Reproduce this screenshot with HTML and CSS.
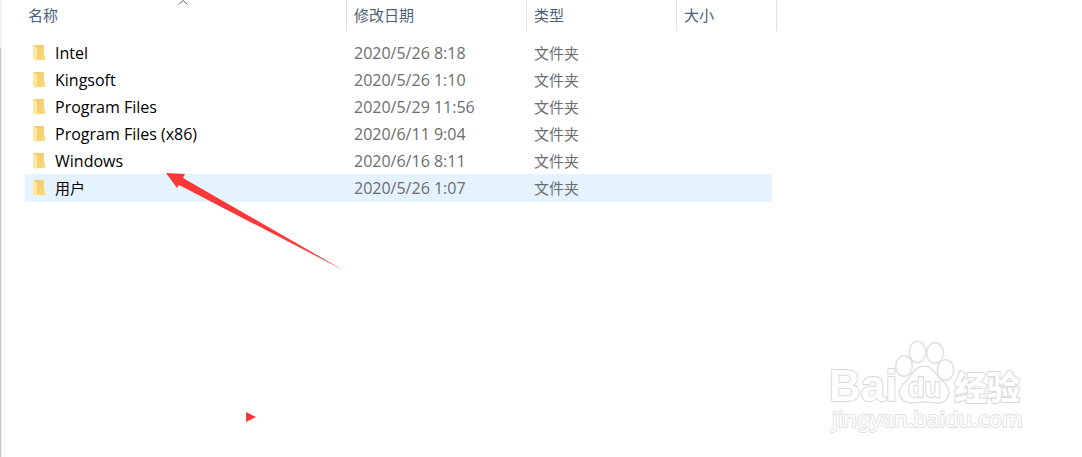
FILE: index.html
```html
<!DOCTYPE html>
<html lang="zh-CN">
<head>
<meta charset="utf-8">
<title>文件资源管理器</title>
<link rel="stylesheet" href="styles.css">
</head>
<body>
<svg class="defs" aria-hidden="true">
  <defs>
    <linearGradient id="folder-back" x1="0" y1="0" x2="1" y2="1">
      <stop offset="0" stop-color="#edc666"/>
      <stop offset="1" stop-color="#fbdc7e"/>
    </linearGradient>
    <symbol id="folder" viewBox="0 0 12 18">
      <path fill="url(#folder-back)" d="M0 1H11V11H12V16H4Z"/>
      <path fill="#ffe8a3" d="M0 1L4 3.500V17.500L0 15.500Z"/>
    </symbol>
  </defs>
</svg>
<main class="explorer">
  <div class="scroll-edge"><div class="scroll-thumb"></div></div>
  <table class="files">
    <colgroup><col class="col-name"><col class="col-date"><col class="col-type"><col class="col-size"></colgroup>
    <thead>
      <tr>
        <th><button class="sort" type="button">名称</button>
          <svg class="caret" viewBox="0 0 10 5" aria-hidden="true"><path d="M0.5 4.5L5 0.5L9.5 4.5"/></svg></th>
        <th><button class="sort" type="button">修改日期</button></th>
        <th><button class="sort" type="button">类型</button></th>
        <th><button class="sort" type="button">大小</button></th>
      </tr>
    </thead>
    <tbody>
      <tr><td><div class="name"><svg class="folder"><use href="#folder"/></svg>Intel</div></td><td class="date">2020/5/26 8:18</td><td>文件夹</td><td></td></tr>
      <tr><td><div class="name"><svg class="folder"><use href="#folder"/></svg>Kingsoft</div></td><td class="date">2020/5/26 1:10</td><td>文件夹</td><td></td></tr>
      <tr><td><div class="name"><svg class="folder"><use href="#folder"/></svg>Program Files</div></td><td class="date">2020/5/29 11:56</td><td>文件夹</td><td></td></tr>
      <tr><td><div class="name"><svg class="folder"><use href="#folder"/></svg>Program Files (x86)</div></td><td class="date">2020/6/11 9:04</td><td>文件夹</td><td></td></tr>
      <tr><td><div class="name"><svg class="folder"><use href="#folder"/></svg>Windows</div></td><td class="date">2020/6/16 8:11</td><td>文件夹</td><td></td></tr>
      <tr class="hovered"><td><div class="name name-cn"><svg class="folder"><use href="#folder"/></svg>用户</div></td><td class="date">2020/5/26 1:07</td><td>文件夹</td><td></td></tr>
    </tbody>
  </table>
  <svg class="arrow" viewBox="0 0 178 98" aria-hidden="true"><path d="M0 0L19 1L17 5L177 97L13 12L11 15Z"/></svg>
  <svg class="marker" viewBox="0 0 10 10" aria-hidden="true"><path d="M0 0L10 5L0 10Z"/></svg>
  <svg class="watermark" viewBox="0 0 200 100">
    <g class="paw">
      <ellipse cx="74" cy="26" rx="7.500" ry="9.500"/>
      <ellipse cx="87.500" cy="12" rx="7.500" ry="10"/>
      <ellipse cx="105" cy="13" rx="7.500" ry="9.500"/>
      <ellipse cx="115.500" cy="30" rx="7.500" ry="9.500"/>
      <path d="M94 27C101 27 104 32 108 38C113 43 119 46 118 53C117 61 111 63 105 62C98 61 91 61 84 62C77 63 71 60 70 53C70 46 76 43 80 38C84 32 87 27 94 27Z"/>
    </g>
    <text class="brand" x="-1" y="61">Bai</text>
    <text class="du" x="78" y="57">du</text>
    <text class="brand-cn" x="124" y="60">经验</text>
    <text class="site" x="2" y="87">jingyan.baidu.com</text>
  </svg>
</main>
</body>
</html>
```
FILE: styles.css
```css
body {
  margin: 0;
  background: #fff;
  font: 15px/27px "Open Sans", "Noto Sans CJK SC", sans-serif;
  color: #6d6d6d;
}

.defs {
  position: absolute;
  width: 0;
  height: 0;
}

.explorer {
  position: relative;
  display: flex;
  gap: 20px;
  min-height: 100vh;
  overflow: hidden;
}

.scroll-edge {
  box-sizing: border-box;
  width: 5px;
  padding-top: 48px;
  display: flex;
  background: linear-gradient(to right, #f0f0f0 2px, #fff 2px);
  border-right: 1px solid #f7f7f7;
}

.scroll-thumb {
  width: 1px;
  background: #c4c4c4;
}

.files {
  width: 752px;
  align-self: flex-start;
  table-layout: fixed;
  border-spacing: 0;
}

.col-name { width: 322px; }
.col-date { width: 180px; }
.col-type { width: 150px; }
.col-size { width: 100px; }

th {
  position: relative;
  height: 31px;
  padding: 0;
  border-right: 1px solid #e2e2e2;
  text-align: left;
}

.sort {
  display: block;
  width: 100%;
  padding: 0 0 0 7px;
  border: 0;
  background: none;
  font: inherit;
  font-weight: 400;
  color: #4c607a;
  text-align: left;
}

th:first-child .sort { padding-left: 3px; }

.caret {
  position: absolute;
  top: 0;
  left: 153px;
  width: 10px;
  height: 5px;
  fill: none;
  stroke: #6a6a6a;
}

tbody::before {
  content: "";
  display: block;
  height: 8px;
}

td {
  height: 25px;
  padding: 2px 0 0 7px;
  line-height: 25px;
  background-clip: padding-box;
}

td:first-child { padding-left: 8px; }
td:last-child { border-right: 5px solid transparent; }
.hovered td { background-color: #e5f3ff; }

.hovered td { padding-bottom: 1px; }

.date { font-size: 16px; }

.name {
  display: flex;
  align-items: center;
  gap: 10px;
  font-size: 16px;
  color: #000;
}

.name-cn { font-size: 15px; }

.folder {
  width: 12px;
  height: 18px;
  margin-bottom: 2px;
}

.arrow {
  position: absolute;
  top: 173px;
  left: 166px;
  width: 178px;
  height: 98px;
  fill: #fd3838;
}

.marker {
  position: absolute;
  top: 412px;
  left: 246px;
  width: 10px;
  height: 10px;
  fill: #fd3838;
}

.watermark {
  position: absolute;
  right: 52px;
  bottom: 17px;
  width: 200px;
  height: 100px;
  overflow: visible;
  fill: #fff;
  stroke: #d8d8d8;
  stroke-width: 2px;
  stroke-linejoin: round;
  paint-order: stroke;
}

.paw {
  stroke: #e0e0e0;
  stroke-width: 3px;
}

.brand {
  font: 700 44px "Liberation Sans", sans-serif;
}

.du {
  font: 700 27px "Liberation Sans", sans-serif;
}

.brand-cn {
  font: 900 33px "Noto Sans CJK SC", sans-serif;
}

.site {
  font: 400 23px "Noto Sans", sans-serif;
  font-size: 22px;
  stroke: #e0e0e0;
}
```
